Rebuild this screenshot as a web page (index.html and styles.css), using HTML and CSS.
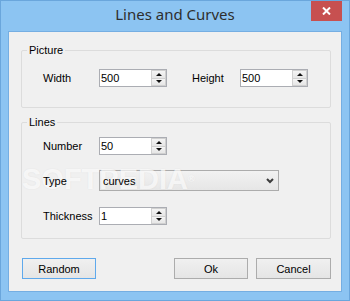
FILE: index.html
```html
<!DOCTYPE html>
<html>
<head>
<meta charset="utf-8">
<link rel="stylesheet" href="styles.css">
</head>
<body>
<div class="window">
  <div class="titlebar">
    <span class="tb-spacer"></span>
    <div class="title">Lines and Curves</div>
    <div class="tb-right">
      <div class="close">
        <svg width="9" height="8" viewBox="0 0 9 8"><path d="M1 0.5 L8 7.5 M8 0.5 L1 7.5" stroke="#fff" stroke-width="2" fill="none"/></svg>
      </div>
    </div>
  </div>
  <div class="client">
    <fieldset class="group group-picture">
      <legend>Picture</legend>
      <div class="group-body">
        <div class="row">
          <span class="lbl lbl-first">Width</span>
          <div class="spin"><span class="val">500</span><div class="spin-btns"><span class="sb"><i class="up"></i></span><span class="sb"><i class="down"></i></span></div></div>
          <span class="lbl lbl-height">Height</span>
          <div class="spin"><span class="val">500</span><div class="spin-btns"><span class="sb"><i class="up"></i></span><span class="sb"><i class="down"></i></span></div></div>
        </div>
      </div>
    </fieldset>
    <fieldset class="group group-lines">
      <legend>Lines</legend>
      <div class="group-body">
        <div class="row">
          <span class="lbl lbl-first">Number</span>
          <div class="spin"><span class="val">50</span><div class="spin-btns"><span class="sb"><i class="up"></i></span><span class="sb"><i class="down"></i></span></div></div>
        </div>
        <div class="row row-select">
          <span class="lbl lbl-first above">Type</span>
          <div class="select"><span class="sel-val above">curves</span>
            <svg class="chev" width="8" height="6" viewBox="0 0 8 6"><path d="M1 1 L4 4 L7 1" stroke="#3c3c3c" stroke-width="2" fill="none"/></svg>
          </div>
        </div>
        <div class="row row-thick">
          <span class="lbl lbl-first">Thickness</span>
          <div class="spin"><span class="val">1</span><div class="spin-btns"><span class="sb"><i class="up"></i></span><span class="sb"><i class="down"></i></span></div></div>
        </div>
      </div>
    </fieldset>
    <div class="buttons">
      <div class="btn btn-default">Random</div>
      <div class="btn btn-ok">Ok</div>
      <div class="btn btn-cancel">Cancel</div>
    </div>
    <div class="watermark">SOFTPEDIA<span class="reg">®</span></div>
  </div>
</div>
</body>
</html>
```

FILE: styles.css
```css
html, body {
  margin: 0;
  padding: 0;
}
body {
  width: 350px;
  height: 301px;
  overflow: hidden;
  font-family: "Liberation Sans", Arial, sans-serif;
  font-size: 11px;
  color: #000;
}
.window {
  width: 350px;
  height: 301px;
  box-sizing: border-box;
  border: 1px solid #6aa6dc;
  background: #8cc4f2;
  padding: 0 7px 8px 7px;
  display: flex;
  flex-direction: column;
}
.titlebar {
  height: 30px;
  flex: none;
  display: grid;
  grid-template-columns: 1fr auto 1fr;
  align-items: start;
}
.title {
  font-family: "Noto Sans", "Open Sans", sans-serif;
  font-size: 15px;
  line-height: 20px;
  color: #2e2e2e;
  margin-top: 3px;
  white-space: nowrap;
}
.tb-right {
  display: flex;
  justify-content: flex-end;
}
.close {
  width: 31px;
  height: 20px;
  background: #c75050;
  display: flex;
  align-items: center;
  justify-content: center;
}
.client {
  position: relative;
  flex: 1;
  background: #f0f0f0;
  border: 1px solid #75aee2;
  padding: 12px 10px 12px 12px;
  display: flex;
  flex-direction: column;
  overflow: hidden;
}
.group {
  margin: 0;
  padding: 0;
  border: 1px solid #dcdcdc;
  border-radius: 2px;
  min-width: 0;
}
.group legend {
  margin-left: 5px;
  padding: 0 2px;
  line-height: 13px;
  font-size: 11px;
}
.group-picture .group-body {
  padding: 12px 0 20px 21px;
}
.group-lines {
  margin-top: 8px;
}
.group-lines .group-body {
  padding: 8px 0 13px 21px;
}
.row {
  display: flex;
  align-items: center;
  height: 18px;
}
.row-select {
  height: 21px;
  margin-top: 15px;
}
.row-thick {
  margin-top: 16px;
}
.lbl {
  white-space: nowrap;
}
.above {
  position: relative;
  z-index: 2;
}
.lbl-first {
  width: 56px;
}
.lbl-height {
  width: 48px;
  margin-left: 25px;
}
.spin {
  width: 68px;
  height: 18px;
  box-sizing: border-box;
  border: 1px solid #abadb3;
  background: #fff;
  display: flex;
}
.val {
  flex: 1;
  padding-left: 1px;
  line-height: 16px;
}
.spin-btns {
  width: 15px;
  display: flex;
  flex-direction: column;
}
.sb {
  flex: 1;
  box-sizing: border-box;
  border: 1px solid #d0d0d0;
  background: linear-gradient(#f4f4f4, #e6e6e6);
  display: flex;
  align-items: center;
  justify-content: center;
}
.sb + .sb {
  border-top: none;
}
.up {
  width: 0;
  height: 0;
  border-left: 3px solid transparent;
  border-right: 3px solid transparent;
  border-bottom: 3px solid #111;
}
.down {
  width: 0;
  height: 0;
  border-left: 3px solid transparent;
  border-right: 3px solid transparent;
  border-top: 3px solid #111;
}
.select {
  width: 180px;
  height: 21px;
  box-sizing: border-box;
  border: 1px solid #acacac;
  background: linear-gradient(#f2f2f2, #e6e6e6);
  display: flex;
  align-items: center;
  padding-left: 3px;
}
.chev {
  margin-left: auto;
  margin-right: 4px;
}
.buttons {
  margin-top: 19px;
  display: flex;
  padding-left: 1px;
}
.btn {
  height: 21px;
  width: 74px;
  box-sizing: border-box;
  border: 1px solid #acacac;
  background: linear-gradient(#f0f0f0, #e5e5e5);
  display: flex;
  align-items: center;
  justify-content: center;
}
.btn-default {
  border-color: #5fa9ec;
}
.btn-ok {
  margin-left: auto;
}
.btn-cancel {
  width: 75px;
  margin-left: 8px;
}
.watermark {
  position: absolute;
  z-index: 1;
  left: 13px;
  top: 133px;
  font-family: "Liberation Sans", Arial, sans-serif;
  font-weight: bold;
  font-size: 29px;
  line-height: 29px;
  color: rgba(255, 255, 255, 0.7);
  text-shadow: 0 0 2px rgba(0, 0, 0, 0.06);
  pointer-events: none;
}
.reg {
  font-size: 9px;
  vertical-align: top;
}
```
